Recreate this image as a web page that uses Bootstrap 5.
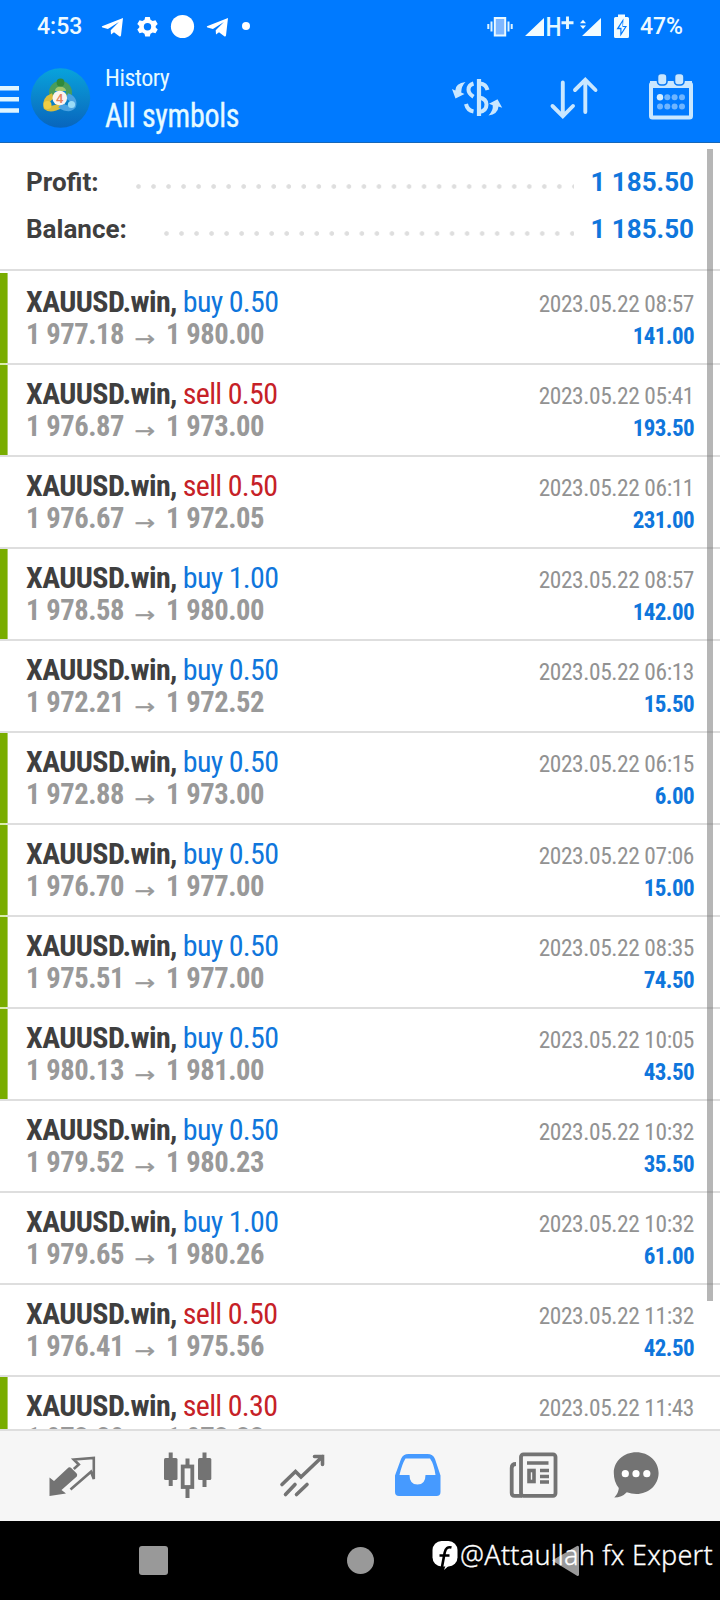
<!DOCTYPE html>
<html lang="en">
<head>
<meta charset="utf-8">
<meta name="viewport" content="width=device-width, initial-scale=1">
<title>History</title>
<link href="https://cdn.jsdelivr.net/npm/bootstrap@5.3.0/dist/css/bootstrap.min.css" rel="stylesheet">
<style>
  :root { --app-blue: #007aff; --link: #0f76dc; --rule: #dedede; }
  body { font-family: "Roboto Condensed", Roboto, sans-serif; width: 720px; height: 1600px; background: #fff; color: #3f3f3f; }
  svg { display: block; flex: none; }
  .status-row { height: 54px; font: 500 23px/54px Roboto, sans-serif; color: #eefaff; padding: 0 37px; }
  .top-area { background: var(--app-blue); height: 143px; border-bottom: 1px solid #1767b8; }
  .app-row { height: 88px; color: #e6faff; }
  .title-small { font-size: 24px; line-height: 28px; letter-spacing: -.5px; }
  .title-big { font-size: 33px; line-height: 38px; letter-spacing: -.3px; margin-top: 5px; transform: scaleX(.91); transform-origin: 0 50%; -webkit-text-stroke: .3px #e6faff; }
  .summary { height: 126px; padding: 16px 26px 0; font: 700 26px/47px Roboto, sans-serif; }
  .sum-line { height: 47px; }
  .sum-line .amount { color: var(--link); }
  .dots { height: 5px; margin-top: 8px; background: radial-gradient(circle at 2.5px 2.5px, #dedede 1.9px, transparent 2.7px) 0 0 / 15.04px 5px repeat-x; }
  .deals { height: 1160px; overflow: hidden; }
  .deal { height: 92px; border-top: 2px solid var(--rule); padding: 0 26px; }
  .deal:first-child { height: 94px; padding-top: 2px; }
  .deal.flagged { background: linear-gradient(#79ad00, #79ad00) no-repeat 0 0 / 7.6px 100%; }
  .deal.flagged:first-child { background-position: 0 2px; }
  .deal.flagged + .flagged { border-image: linear-gradient(90deg, #d9edaa 8px, #dedede 8px) 2; }
  .line-a { height: 34px; margin-top: 12px; line-height: 34px; }
  .line-b { height: 31px; line-height: 31px; }
  .sym { font-weight: 700; font-size: 30px; letter-spacing: -.6px; }
  .op { font-size: 30px; letter-spacing: -.7px; margin-left: 6px; }
  .op-buy { color: var(--link); }
  .op-sell { color: #c62127; }
  .when { font-size: 23.4px; color: #929292; letter-spacing: -.4px; padding-top: 2px; }
  .price { font-weight: 700; font-size: 28.6px; color: #999; letter-spacing: -.45px; }
  .arrow { display: inline-flex; width: 42px; justify-content: center; font: 400 21px/20px "DejaVu Sans", sans-serif; letter-spacing: 0; transform: translateY(2px) scaleX(1.18); -webkit-text-stroke: .3px #999; }
  .gain { font-weight: 700; font-size: 23px; color: var(--link); letter-spacing: -.6px; padding-top: 2px; }
  .scroll-thumb { left: 707px; top: 149px; width: 6px; height: 1152px; background: rgba(110,110,110,.5); }
  .tab-row { height: 92px; background: #f6f6f6; border-top: 2px solid #dedede; padding-left: 15px; }
  .tab-cell { width: 115px; }
  .tab-cell:last-child { width: 91px; }
  .sys-row { height: 79px; background: #000; }
  .handle { left: 432px; top: 15px; color: #fff; font: 300 27px/38px "Noto Sans", sans-serif; white-space: nowrap; }
  .handle span { letter-spacing: .25px; margin-left: 2px; -webkit-text-stroke: .3px #fff; }
</style>
</head>
<body class="position-relative overflow-hidden d-flex flex-column">

<header class="top-area flex-shrink-0">
  <div class="status-row d-flex align-items-center">
    <span>4:53</span>
    <svg style="margin-left:19px" width="152" height="30" viewBox="101 12 152 30" fill="#fff">
      <path id="plane" d="M123 18L102 26.2q-.6.9.5 1.3l5.4 1.5 11-7-8.2 8.3.3 4.2 3-2.3 5.6 4.2q1 .4 1.4-.8z"/>
      <path fill-rule="evenodd" d="M145.200 17h4.600l.7 2.800 2.200 1.200 2.800-.8 2.200 3.700-2 2v1.700l2 2-2.200 3.700-2.800-.8-2.200 1.300-.7 2.700h-4.600l-.7-2.700-2.200-1.300-2.800.8-2.200-3.700 2-2v-1.700l-2-2 2.200-3.700 2.800.8 2.200-1.200zM147.500 23a3.700 3.700 0 100 7.400 3.700 3.700 0 000-7.400z"/>
      <circle cx="182.500" cy="26.500" r="11.600"/>
      <use href="#plane" x="105"/>
      <circle cx="246" cy="26" r="4"/>
    </svg>
    <svg class="ms-auto me-2" width="146" height="30" viewBox="486 12 146 30" fill="#f2fcff">
      <path d="M488.300 24v5M491.500 21.500v10M508.500 21.500v10M511.700 24v5" stroke="#dff4ff" stroke-width="2" fill="none"/>
      <rect x="494.800" y="18" width="10.400" height="17.500" fill="#7fb7ff" stroke="#eaf8ff" stroke-width="2"/>
      <path d="M525 36L544 18V36zM582 36L601 18V36z"/>
      <text x="545.500" y="36" font-family="Roboto" font-size="26" font-weight="500" fill="#e6f8ff" textLength="16" lengthAdjust="spacingAndGlyphs">H</text>
      <path d="M561.500 22.800h12M567.500 16.500v12.500" stroke="#e6f8ff" stroke-width="2.900"/>
      <path d="M580 23.300l3-3.600 3 3.600zM580 25.500l3 3.600 3-3.600z"/>
      <path fill-rule="evenodd" d="M618 14.500h7V17h2.500q1.500 0 1.500 1.500v18q0 1.500-1.500 1.500h-12q-1.500 0-1.500-1.500v-18q0-1.500 1.500-1.500h2.500zM623.500 18.500l-7 10.800h3.800v7.200l6.700-10.500h-4z"/>
      <path d="M622.500 22l-3.500 5.800h2.500v4.700l3.500-5.500h-2.500z"/>
    </svg>
    <span>47%</span>
  </div>
  <div class="app-row d-flex align-items-center">
    <svg width="105" height="88" viewBox="0 54 105 88">
      <defs>
        <linearGradient id="disc" x1="0" y1="0" x2="0" y2="1"><stop offset="0" stop-color="#08a3dc"/><stop offset=".5" stop-color="#0a84cb"/><stop offset="1" stop-color="#0865bd"/></linearGradient>
      </defs>
      <path d="M0 88.300H19M0 99.300H19M0 110.500H19" stroke="#dff5ff" stroke-width="4.600"/>
      <circle cx="60.500" cy="98" r="29.700" fill="url(#disc)"/>
      <g fill="none" stroke-width="6">
        <path d="M52.500 97Q50 85 60.500 84Q71 85 68.500 97" stroke="#4a9d5a"/>
        <path d="M53 96Q45 99 46.500 107Q51 111 61 105" stroke="#d9bd3c"/>
        <path d="M67 96Q75 99 73 106Q69 111 60 105" stroke="#4ba3e2"/>
      </g>
      <path d="M55 91Q55 87 60 86.500Q66 87 66 91z" fill="#a5c76b"/>
      <circle cx="60.500" cy="82.500" r="3.900" fill="#2f8a3a"/>
      <circle cx="47.500" cy="105" r="4" fill="#f0ce45"/>
      <circle cx="71.500" cy="104.500" r="3.600" fill="#9bdcf7"/>
      <circle cx="59.800" cy="98" r="7.300" fill="#fbf4ee"/>
      <text x="59.800" y="102.700" text-anchor="middle" font-family="Roboto" font-size="13" font-weight="500" fill="#e5825c">4</text>
    </svg>
    <div class="align-self-start" style="padding-top:10px">
      <div class="title-small">History</div>
      <div class="title-big">All symbols</div>
    </div>
    <svg class="ms-auto" width="246" height="50" viewBox="450 73 246 50" fill="none" stroke="#c9e7ff">
      <path d="M479 79V116" stroke-width="4.200"/>
      <path d="M473.500 83.500q-5 1.500-5 6.200 0 3.800 5 7M466 104q1.500 6.500 7.500 7.500" stroke-width="4"/>
      <path d="M480 83.500q6 .5 7.500 6.500M479 97.500q7.500 1.200 7.500 7 0 6.500-7.500 7.500" stroke-width="4"/>
      <path d="M465.500 82Q455.500 83 455.300 90.500l-3.300-1.500 3.500 9.500 9-4.500-3.300-1.500Q461.300 86 465.500 82z" fill="#c9e7ff" stroke="none"/>
      <path d="M488.500 115.500q9.500-1.500 10-9l3.700 1.200-4.700-8.500-8.500 4.500 3.700 1.500q.8 5-4.200 10.300z" fill="#c9e7ff" stroke="none"/>
      <path d="M562.800 82.500V116M552.500 106l10.300 10.300L573 106M585.300 112V80M575 90l10.300-10.300L595.500 90" stroke-width="3.900" stroke-linecap="round"/>
      <rect x="651" y="83.500" width="40" height="34" rx="1.500" stroke-width="4"/>
      <path d="M650 84.500H692" stroke-width="7"/>
      <g fill="#c9e7ff" stroke="#0879f5" stroke-width="1.600"><rect x="657.500" y="73.500" width="9.500" height="11.500" rx="3.500"/><rect x="674.500" y="73.500" width="9.500" height="11.500" rx="3.500"/></g>
      <g stroke="none" fill="#6fb5ff"><circle cx="660" cy="97.200" r="3.200" fill="#d6eeff"/><circle cx="667.300" cy="97.200" r="3"/><circle cx="674.600" cy="97.200" r="3"/><circle cx="682" cy="97.200" r="3"/><circle cx="660" cy="106.500" r="3"/><circle cx="667.300" cy="106.500" r="3"/><circle cx="674.600" cy="106.500" r="3"/><circle cx="682" cy="106.500" r="3"/></g>
    </svg>
    <div class="ps-4"></div>
  </div>
</header>

<section class="summary flex-shrink-0">
  <div class="sum-line d-flex align-items-center"><span>Profit:</span><span class="dots ms-auto" style="width:438px"></span><span class="amount ms-3">1 185.50</span></div>
  <div class="sum-line d-flex align-items-center"><span>Balance:</span><span class="dots ms-auto" style="width:410px"></span><span class="amount ms-3">1 185.50</span></div>
</section>

<main class="deals flex-shrink-0" id="deals"></main>

<nav class="tab-row d-flex align-items-center flex-shrink-0">
  <div class="tab-cell d-flex justify-content-center">
    <svg width="50" height="50" viewBox="48 1450 50 50">
      <path d="M68.500 1466.500q1.500-.7 3 .8l5 5q1.300 1.500.3 3.200L61.500 1489l4.500 3.500-16.500 2.500V1476.500l4.500 3.500z" fill="#737373"/>
      <path d="M70.500 1488.500l20.500-17.800 2.800 7.300V1457l-20 1.500 5 5-5 4.500" fill="none" stroke="#737373" stroke-width="2.600"/>
    </svg>
  </div>
  <div class="tab-cell d-flex justify-content-center">
    <svg width="50" height="50" viewBox="163 1450 50 50" fill="#737373">
      <path d="M168.700 1451.500h4v33.500h-4zM202.500 1451.500h4v34.500h-4zM185.500 1457.500h4v7h-4zM185.500 1486h4v11h-4z"/>
      <rect x="164" y="1457" width="13.500" height="22" rx="1.500"/><rect x="198" y="1457" width="13.300" height="22" rx="1.500"/>
      <rect x="182.700" y="1465.500" width="9.600" height="20.500" fill="none" stroke="#737373" stroke-width="3.800"/>
    </svg>
  </div>
  <div class="tab-cell d-flex justify-content-center">
    <svg width="50" height="50" viewBox="278 1450 50 50" fill="none" stroke="#737373" stroke-width="3.600" stroke-linecap="round">
      <path d="M282 1483.500l13.500-13 5.500 5.500 21.500-20.500M314.500 1455.500h8v8M285.500 1493.500l9.500-10M296.500 1493.500l10.500-10"/>
    </svg>
  </div>
  <div class="tab-cell d-flex justify-content-center">
    <svg width="50" height="50" viewBox="393 1450 50 50">
      <path fill="#469aff" fill-rule="evenodd" d="M408.500 1453h19q5.500 0 7.500 5l5.500 16.500V1491q0 4-4 4h-37.500q-4 0-4-4v-16.500l6-16.500q2-5 7.500-5zM405.500 1457.500q-3.500 5.500-6 16.500h10q0 9.500 8 9.500t8-9.500h10q-1.500-11-5.500-16.500z"/>
    </svg>
  </div>
  <div class="tab-cell d-flex justify-content-center">
    <svg width="50" height="50" viewBox="508 1450 50 50" fill="none" stroke="#737373" stroke-width="3.800">
      <rect x="521" y="1453.300" width="34.500" height="41.500" rx="2.500"/>
      <path d="M516 1463q-4.300 0-4.300 4v25q0 2.800 3 2.800H522"/>
      <path d="M527 1462h21.500M540 1469.500h9M540 1475.500h9M540 1481h9" stroke-width="3.500"/>
      <rect x="529" y="1469.500" width="5" height="11" stroke-width="3.600"/>
    </svg>
  </div>
  <div class="tab-cell d-flex justify-content-center">
    <svg width="50" height="50" viewBox="611 1450 50 50">
      <path fill="#737373" d="M636.300 1451.300c12.500 0 22.300 9 22.300 20.700s-9.800 21-22.300 21q-5 0-9.500-1.800-5 5.300-12.500 5.300 4.300-4.500 4.500-9.500-5-6-5-15c0-11.700 9.800-20.700 22.500-20.700z"/>
      <g fill="#fff"><circle cx="625.300" cy="1472.700" r="3.600"/><circle cx="636" cy="1472.700" r="3.600"/><circle cx="646.800" cy="1472.700" r="3.600"/></g>
    </svg>
  </div>
</nav>

<footer class="sys-row position-relative flex-shrink-0">
  <svg width="720" height="79" viewBox="0 1521 720 79" fill="#999">
    <rect x="139" y="1546" width="29" height="29" rx="3"/>
    <circle cx="360.500" cy="1560.500" r="13.500"/>
    <path d="M552 1560.500L577 1546q2-.7 2 1.500v27q0 2-2 1.200z"/>
  </svg>
  <div class="handle position-absolute d-flex align-items-center">
    <svg width="26" height="30" viewBox="432 1542 26 30"><rect x="432.500" y="1543" width="25" height="25.500" rx="9" fill="#fff"/><path d="M451.500 1549.500q-5.500-1.500-6.800 5l-3 16M439.500 1557.500h10" stroke="#000" stroke-width="2.600" fill="none"/><path d="M445.500 1568l-1.500 4 5-4.500z" fill="#fff"/></svg>
    <span>@Attaullah fx Expert</span>
  </div>
</footer>

<div class="scroll-thumb position-absolute"></div>

<script src="https://cdn.jsdelivr.net/npm/bootstrap@5.3.0/dist/js/bootstrap.bundle.min.js"></script>
<script>
  // [side, volume, open, close, time, profit, flagged]
  const deals = [
    ['buy', '0.50', '1 977.18', '1 980.00', '08:57', '141.00', 1],
    ['sell', '0.50', '1 976.87', '1 973.00', '05:41', '193.50', 1],
    ['sell', '0.50', '1 976.67', '1 972.05', '06:11', '231.00', 0],
    ['buy', '1.00', '1 978.58', '1 980.00', '08:57', '142.00', 1],
    ['buy', '0.50', '1 972.21', '1 972.52', '06:13', '15.50', 0],
    ['buy', '0.50', '1 972.88', '1 973.00', '06:15', '6.00', 1],
    ['buy', '0.50', '1 976.70', '1 977.00', '07:06', '15.00', 1],
    ['buy', '0.50', '1 975.51', '1 977.00', '08:35', '74.50', 1],
    ['buy', '0.50', '1 980.13', '1 981.00', '10:05', '43.50', 1],
    ['buy', '0.50', '1 979.52', '1 980.23', '10:32', '35.50', 0],
    ['buy', '1.00', '1 979.65', '1 980.26', '10:32', '61.00', 0],
    ['sell', '0.50', '1 976.41', '1 975.56', '11:32', '42.50', 0],
    ['sell', '0.30', '1 973.29', '1 973.33', '11:43', '', 1]
  ];
  document.getElementById('deals').innerHTML = deals.map(([side, vol, open, close, time, gain, flag]) => `
    <article class="deal d-flex flex-column ${flag ? 'flagged' : ''}">
      <div class="line-a d-flex justify-content-between">
        <div><span class="sym">XAUUSD.win,</span><span class="op op-${side}">${side} ${vol}</span></div>
        <div class="when">2023.05.22 ${time}</div>
      </div>
      <div class="line-b d-flex justify-content-between">
        <div class="price">${open}<span class="arrow">→</span>${close}</div>
        <div class="gain">${gain}</div>
      </div>
    </article>`).join('');
</script>
</body>
</html>
